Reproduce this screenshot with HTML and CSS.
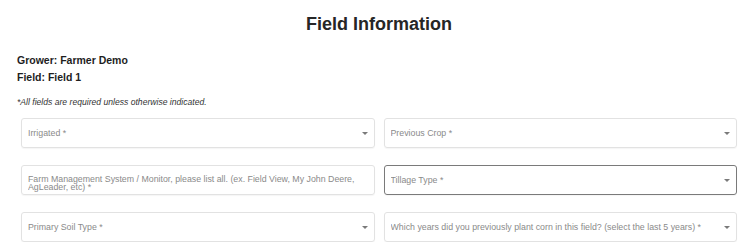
FILE: index.html
```html
<!DOCTYPE html>
<html>
<head>
<meta charset="utf-8">
<link rel="stylesheet" href="styles.css">
</head>
<body>
<div class="page">
  <h1 class="title">Field Information</h1>
  <div class="meta">
    <div class="meta-line">Grower: Farmer Demo</div>
    <div class="meta-line">Field: Field 1</div>
  </div>
  <p class="note">*All fields are required unless otherwise indicated.</p>
  <div class="grid">
    <div class="field select"><span class="label">Irrigated *</span><span class="caret"></span></div>
    <div class="field select"><span class="label">Previous Crop *</span><span class="caret"></span></div>
    <div class="field text"><span class="label multi">Farm Management System / Monitor, please list all. (ex. Field View, My John Deere, AgLeader, etc) *</span></div>
    <div class="field select hover"><span class="label">Tillage Type *</span><span class="caret"></span></div>
    <div class="field select"><span class="label">Primary Soil Type *</span><span class="caret"></span></div>
    <div class="field select"><span class="label">Which years did you previously plant corn in this field? (select the last 5 years) *</span><span class="caret"></span></div>
  </div>
</div>
</body>
</html>
```

FILE: styles.css
```css
html, body {
  margin: 0;
  padding: 0;
  background: #ffffff;
}
body {
  font-family: "Liberation Sans", Arial, sans-serif;
  color: #222222;
}
.page {
  padding: 14px 8px 0 17px;
}
.title {
  margin: 0;
  font-size: 18px;
  font-weight: bold;
  text-align: center;
  line-height: 21px;
  color: #262626;
}
.meta {
  margin-top: 17px;
}
.meta-line {
  font-size: 10.5px;
  font-weight: bold;
  line-height: 17px;
  color: #1e1e1e;
}
.note {
  margin: 11px 0 0 0;
  font-size: 8.6px;
  font-style: italic;
  line-height: 11px;
  color: #333333;
}
.grid {
  display: grid;
  grid-template-columns: 1fr 1fr;
  column-gap: 9px;
  row-gap: 17px;
  padding: 0 4px;
  margin-top: 10px;
}
.field {
  height: 30px;
  box-sizing: border-box;
  border: 1px solid #e2e2e2;
  border-radius: 3px;
  box-shadow: 0 1px 1px rgba(0,0,0,0.04);
  display: flex;
  align-items: center;
  padding: 0 6px 0 6px;
}
.field.hover {
  border-color: #7a7a7a;
}
.label {
  flex: 1;
  font-size: 8.8px;
  color: #8a8a8a;
  white-space: nowrap;
  overflow: hidden;
}
.label.multi {
  white-space: normal;
  line-height: 8.5px;
  padding-top: 6px;
}
.caret {
  width: 0;
  height: 0;
  border-left: 3px solid transparent;
  border-right: 3px solid transparent;
  border-top: 3px solid #7a7a7a;
  margin-left: 8px;
}
```
